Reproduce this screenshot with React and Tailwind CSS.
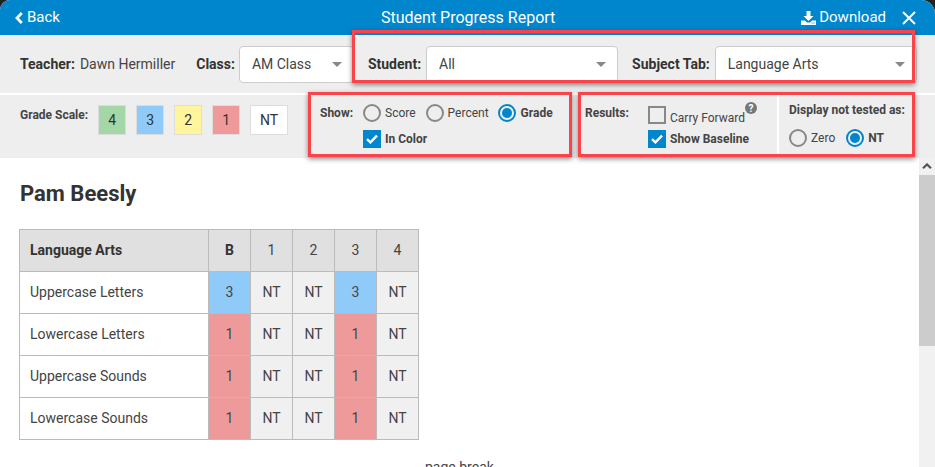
import React from "react";

const font = { fontFamily: "Roboto, sans-serif" };

function Radio({ on, className = "" }) {
  return on ? (
    <span className={"w-[18px] h-[18px] rounded-full border-2 border-[#0086cc] bg-[#eeeeee] flex items-center justify-center shrink-0 " + className}>
      <span className="w-[10px] h-[10px] rounded-full bg-[#0086cc]" />
    </span>
  ) : (
    <span className={"block w-[18px] h-[18px] rounded-full border-2 border-[#888] bg-transparent shrink-0 " + className} />
  );
}

function Check({ on }) {
  return on ? (
    <span className="w-[18px] h-[18px] bg-[#0086cc] flex items-center justify-center shrink-0">
      <svg width="12" height="10" viewBox="0 0 12 10" fill="none">
        <path d="M1 5.2 L4.4 8.4 L11 1.6" stroke="#fff" strokeWidth="2.4" />
      </svg>
    </span>
  ) : (
    <span className="w-[18px] h-[18px] border-2 border-[#888] bg-transparent shrink-0" />
  );
}

function Select({ className, children }) {
  return (
    <div className={"h-[37px] bg-white border border-[#ccc] rounded-[4px] flex items-center justify-between pl-[12px] pr-[11px] text-[14px] text-[#444] " + className}>
      <span>{children}</span>
      <span className="w-0 h-0 border-l-[5px] border-r-[5px] border-t-[5px] border-l-transparent border-r-transparent border-t-[#888]" />
    </div>
  );
}

function Swatch({ bg, w = "w-[28px]", children }) {
  return (
    <span className={"h-[30px] border border-[#ddd] flex items-center justify-center text-[14px] text-[#333] " + w + " " + bg}>{children}</span>
  );
}

function Cell({ v, h }) {
  const bg = v === "3" ? "bg-[#90caf9]" : v === "1" ? "bg-[#ef9a9a]" : "bg-[#f0f0f0]";
  return <td className={"w-[42px] h-[42px] border border-[#bbb] text-center text-[14px] text-[#444] " + (h ? "bg-[#e0e0e0]" : bg)}>{v}</td>;
}

const rows = [
  ["Uppercase Letters", "3"],
  ["Lowercase Letters", "1"],
  ["Uppercase Sounds", "1"],
  ["Lowercase Sounds", "1"],
];

function Note({ className }) {
  return <div className={"absolute border-[3px] border-[#f9444c] shadow-[0_2px_5px_rgba(0,0,0,0.45)] " + className} />;
}

export default function App() {
  return (
    <div style={font} className="relative w-[935px] h-[467px] overflow-hidden bg-[#222]">
      <div className="h-full flex flex-col rounded-tl-[10px] rounded-tr-[14px] overflow-hidden bg-white">
        <header className="h-[35px] bg-[#0086cc] text-white flex items-center justify-between pl-[15px] pr-[19px] relative shrink-0">
          <div className="flex items-center gap-[4px] text-[15px]">
            <svg width="8" height="12" viewBox="0 0 8 12" fill="none">
              <path d="M6.8 1 L2 6 L6.8 11" stroke="#fff" strokeWidth="2.8" />
            </svg>
            <span>Back</span>
          </div>
          <div className="absolute left-[381px] text-[16px]">Student Progress Report</div>
          <div className="flex items-center gap-[16px]">
            <div className="flex items-center gap-[3px] text-[15px]">
              <svg width="15" height="14" viewBox="0 0 15 14" fill="#fff">
                <path d="M5.5 0 H9.5 V5 H12.5 L7.5 10 L2.5 5 H5.5 Z" />
                <path d="M0 9.5 H3.8 L6 11.6 H9 L11.2 9.5 H15 V14 H0 Z" />
                <rect x="10.5" y="11.5" width="1" height="1" fill="#0086cc" />
                <rect x="12.5" y="11.5" width="1" height="1" fill="#0086cc" />
              </svg>
              <span>Download</span>
            </div>
            <svg width="14" height="14" viewBox="0 0 14 14" fill="none">
              <path d="M1 1 L13 13 M13 1 L1 13" stroke="#fff" strokeWidth="2" />
            </svg>
          </div>
        </header>

        <div className="h-[58px] bg-[#eeeeee] flex items-center pl-[20px] text-[14px] text-[#444] shrink-0">
          <span className="font-bold text-[#333]">Teacher:</span>
          <span className="ml-[5px]">Dawn Hermiller</span>
          <span className="ml-[21px] font-bold text-[#333]">Class:</span>
          <Select className="ml-[4px] w-[115px]">AM Class</Select>
          <span className="ml-[14px] font-bold text-[#333]">Student:</span>
          <Select className="ml-[5px] w-[192px]">All</Select>
          <span className="ml-[14px] font-bold text-[#333]">Subject Tab:</span>
          <Select className="ml-[5px] w-[202px]">Language Arts</Select>
        </div>

        <div className="h-[2px] bg-white shrink-0" />

        <div className="h-[63px] bg-[#eeeeee] flex text-[12px] text-[#444] shrink-0">
          <div className="w-[309px] pl-[20px] pt-[10px] flex items-start">
            <span className="font-bold text-[#444] mt-[1px]">Grade Scale:</span>
            <div className="flex gap-[10px] ml-[10px]">
              <Swatch bg="bg-[#a5d6a7]">4</Swatch>
              <Swatch bg="bg-[#90caf9]">3</Swatch>
              <Swatch bg="bg-[#fff59d]">2</Swatch>
              <Swatch bg="bg-[#ef9a9a]">1</Swatch>
              <Swatch bg="bg-white" w="w-[38px]">NT</Swatch>
            </div>
          </div>
          <div className="w-[270px] pl-[11px] pt-[9px]">
            <div className="flex items-center h-[18px]">
              <span className="font-bold w-[43px]">Show:</span>
              <Radio />
              <span className="ml-[4px]">Score</span>
              <Radio className="ml-[10px]" />
              <span className="ml-[4px]">Percent</span>
              <Radio on className="ml-[9px]" />
              <span className="ml-[5px] font-bold">Grade</span>
            </div>
            <div className="flex items-center h-[18px] mt-[8px] pl-[43px]">
              <Check on />
              <span className="ml-[4px] font-bold">In Color</span>
            </div>
          </div>
          <div className="w-[198px] pl-[6px] pt-[8px] flex items-start">
            <span className="font-bold w-[63px] mt-[1px]">Results:</span>
            <div className="mt-[3px]">
              <div className="flex items-center h-[18px] relative">
                <Check />
                <span className="ml-[4px] mt-[6px]">Carry Forward</span>
                <span className="absolute left-[97px] -top-[4px] w-[12px] h-[12px] rounded-full bg-[#777] text-white text-[10px] font-bold flex items-center justify-center">?</span>
              </div>
              <div className="flex items-center h-[18px] mt-[6px]">
                <Check on />
                <span className="ml-[4px] font-bold">Show Baseline</span>
              </div>
            </div>
          </div>
          <div className="border-l-2 border-white pl-[10px] pt-[5px]">
            <div className="font-bold mt-[1px]">Display not tested as:</div>
            <div className="flex items-center mt-[10px]">
              <Radio />
              <span className="ml-[4px]">Zero</span>
              <Radio on className="ml-[11px]" />
              <span className="ml-[4px] font-bold">NT</span>
            </div>
          </div>
        </div>

        <div className="flex-1 min-h-0 flex">
          <main className="flex-1 pl-[19px] pt-[23px] relative">
            <h1 className="text-[22px] font-bold text-[#333] leading-[26px] pl-[1px]">Pam Beesly</h1>
            <table className="mt-[22px] border-collapse w-[400px] table-fixed">
              <thead>
                <tr>
                  <th className="h-[42px] border border-[#bbb] bg-[#e0e0e0] text-left pl-[10px] text-[14px] font-bold text-[#333]">Language Arts</th>
                  <th className="w-[42px] border border-[#bbb] bg-[#e0e0e0] text-[14px] font-bold text-[#333]">B</th>
                  <Cell v="1" h />
                  <Cell v="2" h />
                  <Cell v="3" h />
                  <Cell v="4" h />
                </tr>
              </thead>
              <tbody>
                {rows.map(([name, v]) => (
                  <tr key={name}>
                    <td className="h-[42px] border border-[#bbb] bg-white pl-[10px] text-[14px] text-[#444]">{name}</td>
                    <Cell v={v} />
                    <Cell v="NT" />
                    <Cell v="NT" />
                    <Cell v={v} />
                    <Cell v="NT" />
                  </tr>
                ))}
              </tbody>
            </table>
            <div className="mt-[19px] ml-[406px] text-[14px] text-[#444] leading-[16px]">page break</div>
          </main>
          <aside className="w-[16px] bg-[#f1f1f1] flex flex-col items-center shrink-0">
            <svg className="mt-[5px]" width="10" height="6" viewBox="0 0 10 6" fill="none">
              <path d="M1 5.2 L5 1.4 L9 5.2" stroke="#555" strokeWidth="2.2" />
            </svg>
            <div className="mt-[6px] w-full h-[171px] bg-[#cccccc]" />
          </aside>
        </div>
      </div>

      <Note className="left-[352px] top-[30px] w-[563px] h-[53px]" />
      <Note className="left-[308px] top-[92px] w-[264px] h-[65px]" />
      <Note className="left-[578px] top-[92px] w-[337px] h-[65px]" />
    </div>
  );
}
